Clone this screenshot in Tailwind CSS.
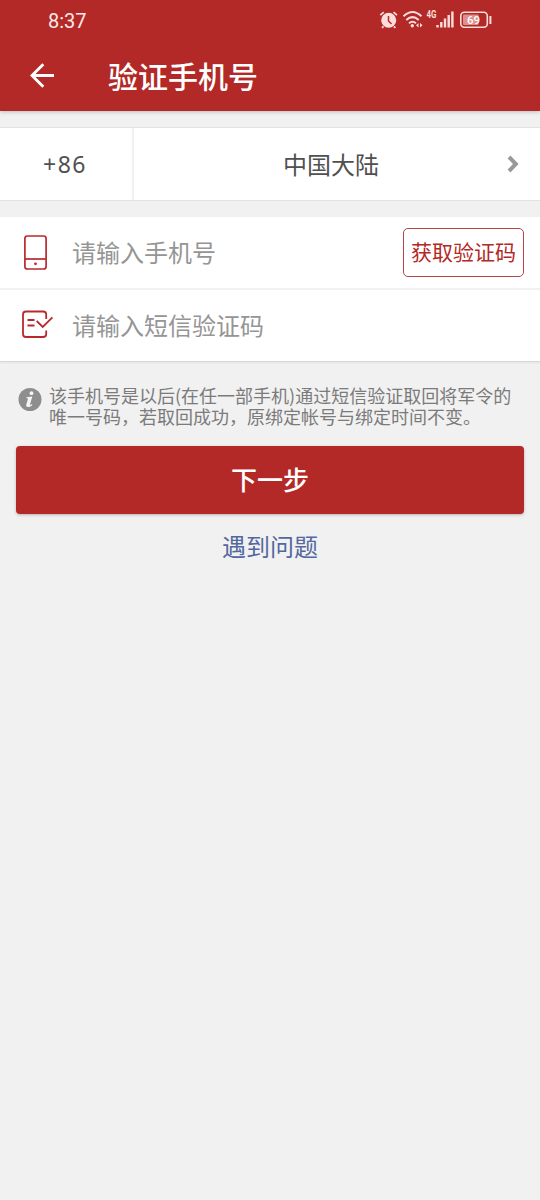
<!DOCTYPE html>
<html lang="zh-CN">
<head>
<meta charset="utf-8">
<meta name="viewport" content="width=device-width, initial-scale=1">
<title>验证手机号</title>
<script src="https://cdn.jsdelivr.net/npm/@tailwindcss/browser@4"></script>
</head>
<body class="min-h-screen bg-[#f1f1f1] font-['Noto_Sans_CJK_SC',sans-serif]">
<header class="h-[111px] bg-[#b22927] text-white shadow-[0_1px_4px_rgba(0,0,0,0.22)]">
  <div class="flex h-10 items-center justify-between pl-12 pr-12">
    <span class="pt-px font-['Roboto',sans-serif] text-[20px] leading-10 text-[#fde9e6]">8:37</span>
    <svg class="h-10 w-[113px]" viewBox="379 0 113 40" fill="none" stroke="#fbdedb">
      <circle cx="388.700" cy="20.200" r="7.500" fill="#fbdedb" stroke="none"/>
      <path d="M380.300 15.200l3.500-3M397 15.200l-3.500-3M383.500 26.300l-1.500 1.500M393.900 26.300l1.500 1.500" stroke-width="1.700"/>
      <path d="M388.500 16v5l3 3" stroke="#b22927" stroke-width="1.500"/>
      <path d="M403.500 16.300q9-8.500 18 0M406.300 19.900q6.200-5.600 12.400 0M409 23.200q3.500-3 7 0" stroke-width="2"/>
      <circle cx="412.300" cy="25.700" r="1.700" fill="#fbdedb" stroke="none"/>
      <path d="M418.500 23l-2.500 2.300 2.500 2.300zM420 23l2.500 2.300-2.500 2.300z" fill="#fbdedb" stroke="none"/>
      <text x="426.500" y="18.300" textLength="10" lengthAdjust="spacingAndGlyphs" font-family="Roboto, sans-serif" font-size="10" font-weight="700" fill="#fbdedb" stroke="none">4G</text>
      <path d="M437.500 25v2.500M441.300 22v5.500M445 18.500v9M448.700 15v12.500M452.400 11.500v16" stroke-width="2.400"/>
      <rect x="460.800" y="12.300" width="26.500" height="15" rx="3.500" stroke-width="1.600"/>
      <rect x="463" y="14.500" width="15.500" height="10.600" rx="1" fill="#dd8f8d" stroke="none"/>
      <path d="M490.400 16v8" stroke-width="2"/>
      <text x="473.600" y="24.300" text-anchor="middle" font-family="Roboto, sans-serif" font-size="11.500" font-weight="500" fill="#fff" stroke="none">69</text>
    </svg>
  </div>
  <div class="flex h-[71px] items-center pl-[30px]">
    <svg class="h-[26px] w-[26px]" viewBox="0 0 26 26" fill="none" stroke="#fff" stroke-width="2.900"><path d="M24 12.500H2M13.300 1.200L2 12.500l11.300 11.300"/></svg>
    <h1 class="ml-[52px] text-[30px] font-medium leading-[71px]">验证手机号</h1>
  </div>
</header>
<main>
  <section class="mt-4 flex h-[74px] items-center border-y border-[#e2e2e2] bg-white text-[24px] text-[#505050]">
    <div class="flex h-full w-[134px] items-center justify-center border-r-2 border-[#f0f0f0] pr-0.5 font-['Noto_Sans',sans-serif] text-[23px] tracking-[1.500px]">+86</div>
    <div class="flex h-full flex-1 items-center pl-[149px] pr-[21px]">
      <span class="flex-1">中国大陆</span>
      <svg class="h-[18px] w-3" viewBox="0 0 12 18" fill="none" stroke="#999" stroke-width="4"><path d="M2 2l6.800 7L2 16"/></svg>
    </div>
  </section>
  <section class="mt-4 border-b border-[#d8d8d8] bg-white text-[24px] text-[#959595] shadow-[0_1px_2px_rgba(0,0,0,0.06)]">
    <div class="flex h-[73px] items-center border-b-2 border-[#f1f1f1] pl-5 pr-4">
      <svg class="h-9 w-[34px]" viewBox="20 235 34 36" fill="none" stroke="#b9282e" stroke-width="1.700"><rect x="24.900" y="236" width="21.200" height="33" rx="2.500"/><path d="M25 259h21"/><circle cx="35.500" cy="263.800" r="1.400" fill="#b9282e" stroke="none"/></svg>
      <span class="ml-[18px] flex-1 pb-0.5">请输入手机号</span>
      <button class="h-[49px] w-[121px] rounded-[5px] border border-[#b94347] pb-0.5 text-[21px] text-[#b22927]">获取验证码</button>
    </div>
    <div class="flex h-[71px] items-center pl-5">
      <svg class="h-9 w-[34px]" viewBox="20 308 34 36" fill="none" stroke="#b9282e" stroke-width="1.800"><path d="M46.200 319v-4.500a3 3 0 0 0-3-3H26a3 3 0 0 0-3 3V334a3 3 0 0 0 3 3h17.200a3 3 0 0 0 3-3v-3.500M27.500 320h7M27.500 325.500h7M36.700 321l6 6 9.700-9.600"/></svg>
      <span class="ml-[18px] pb-0.5">请输入短信验证码</span>
    </div>
  </section>
  <div class="mt-6 flex pl-[18px] text-[18px] leading-[21px] text-[#7b7b7b]">
    <svg class="mt-[1px] h-6 w-6 shrink-0" viewBox="0 0 24 24"><circle cx="12" cy="12.500" r="11.500" fill="#8e8e8e"/><g fill="#f5f5f5"><circle cx="13.500" cy="6.200" r="1.900"/><path d="M8.500 10.300l5.800-.8-2.400 8.300c-.2.900.7.500 1.900-.7l.7.600c-1.500 1.800-3 2.400-4.400 2.400-1.800 0-2.200-1.200-1.800-2.500l1.600-5.400c.2-.9-.3-1-1.500-1z"/></g></svg>
    <p class="-mt-px ml-[7px] whitespace-nowrap">该手机号是以后(在任一部手机)通过短信验证取回将军令的<br>唯一号码，若取回成功，原绑定帐号与绑定时间不变。</p>
  </div>
  <button class="mx-4 mt-[19px] block h-[68px] w-[508px] rounded-[4px] bg-[#b22927] pb-1 text-[26px] font-medium text-white shadow-[0_1px_3px_rgba(0,0,0,0.25)]">下一步</button>
  <a class="mt-[14px] block text-center text-[24px] leading-9 text-[#5468a0]">遇到问题</a>
</main>
</body>
</html>
